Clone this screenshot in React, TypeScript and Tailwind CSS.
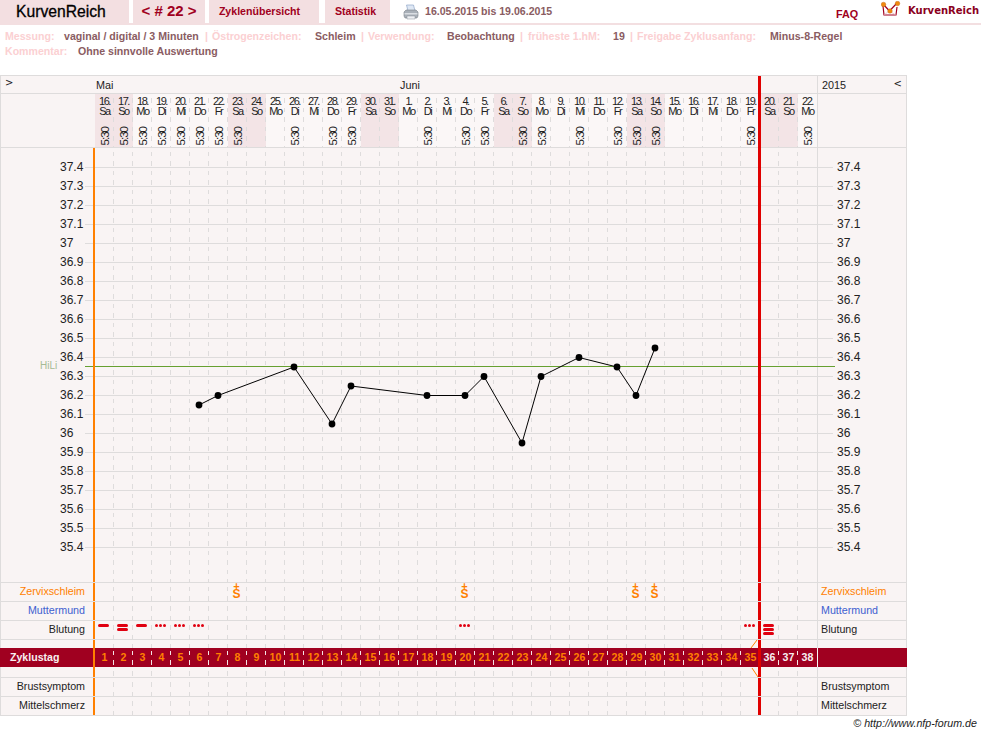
const DAYS = [
  ...Array.from({ length: 16 }, (_, i) => 16 + i),
  ...Array.from({ length: 22 }, (_, i) => 1 + i),
];
const WEEK = ['Sa', 'So', 'Mo', 'Di', 'Mi', 'Do', 'Fr'];
const MEASURED = [0, 1, 2, 3, 4, 5, 6, 7, 10, 12, 13, 17, 19, 20, 22, 23, 25, 27, 28, 29, 34, 37];
const TEMPS = [37.4, 37.3, 37.2, 37.1, 37, 36.9, 36.8, 36.7, 36.6, 36.5, 36.4, 36.3, 36.2, 36.1, 36, 35.9, 35.8, 35.7, 35.6, 35.5, 35.4];
const POINTS: [number, number][] = [
  [5, 36.15], [6, 36.2], [10, 36.35], [12, 36.05], [13, 36.25], [17, 36.2], [19, 36.2],
  [20, 36.3], [22, 35.95], [23, 36.3], [25, 36.4], [27, 36.35], [28, 36.2], [29, 36.45],
];
const SCHLEIM = [7, 19, 28, 29];
const INFO: [string, string, number][] = [
  ['label', 'Messung:', 59],
  ['value', 'vaginal / digital / 3 Minuten', 141],
  ['label', '|', 7],
  ['label', 'Östrogenzeichen:', 103],
  ['value', 'Schleim', 46],
  ['label', '|', 7],
  ['label', 'Verwendung:', 79],
  ['value', 'Beobachtung', 73],
  ['label', '|', 8],
  ['label', 'früheste 1.hM:', 85],
  ['value', '19', 17],
  ['label', '|', 7],
  ['label', 'Freigabe Zyklusanfang:', 133],
  ['value', 'Minus-8-Regel', 90],
];

const font = 'font-["Liberation_Sans",Arial,sans-serif]';
const px = (i: number) => 104 + 19 * i;
const py = (t: number) => 285.5 - (t - 36) * 190;

const Dashes = ({ dark = false }: { dark?: boolean }) => (
  <div className="flex h-full">
    {DAYS.map((_, i) => (
      <div
        key={i}
        className={`h-full w-[19px] ${i === 37 ? '' : dark ? 'bg-[repeating-linear-gradient(to_bottom,transparent_0,transparent_3px,#f4e4e6_3px,#f4e4e6_7.5px,transparent_7.5px,transparent_9.5px)]' : 'bg-[repeating-linear-gradient(to_bottom,transparent_0,transparent_4px,#dedcdc_4px,#dedcdc_8.5px,transparent_8.5px,transparent_9.5px)]'} bg-[length:1px_100%] bg-[position:right_top] bg-no-repeat`}
      />
    ))}
  </div>
);

const Row = ({ h, label, labelClass = 'text-[#222]', right, rightClass = 'text-[#222]', children }: {
  h: string;
  label?: string;
  labelClass?: string;
  right?: string;
  rightClass?: string;
  children?: React.ReactNode;
}) => (
  <div className={`flex ${h} border-b border-[#dedcdc] text-[10.7px]`}>
    <div className={`flex w-[93px] items-center justify-end border-l border-[#dedcdc] pb-[2px] pr-[8px] ${labelClass}`}>{label}</div>
    <div className="relative w-[724px] border-l-2 border-[#ff8000]">
      <Dashes />
      {children}
      <div className="absolute inset-y-0 left-[663px] w-[3px] bg-[#e00000]" />
    </div>
    <div className={`flex w-[90px] items-center border-x border-[#dedcdc] pb-[2px] pl-[3px] ${rightClass}`}>{right}</div>
  </div>
);

const Bar = () => <div className="h-[3px] w-[11px] rounded-full bg-[#e00010]" />;
const Dots = () => (
  <div className="flex gap-[1px]">
    <div className="h-[3px] w-[3px] rounded-full bg-[#e00010]" />
    <div className="h-[3px] w-[3px] rounded-full bg-[#e00010]" />
    <div className="h-[3px] w-[3px] rounded-full bg-[#e00010]" />
  </div>
);

const Bleed = ({ col, children }: { col: number; children: React.ReactNode }) => (
  <div className="absolute top-[3px] flex w-[19px] flex-col items-center gap-[1px]" style={{ left: col * 19 - 1 }}>
    {children}
  </div>
);

export default function App() {
  return (
    <div className={`h-[735px] w-[981px] overflow-hidden bg-white ${font}`}>
      {/* Top navigation */}
      <div className="flex h-[25px] items-start whitespace-nowrap border-b-2 border-[#f3dfe1]">
        <div className="flex h-[23px] w-[129px] shrink-0 items-center bg-[#f3dfe1] pl-[16px] text-[15.7px] text-black [-webkit-text-stroke:0.3px_#000]">KurvenReich</div>
        <div className="ml-[4px] flex h-[23px] w-[72px] shrink-0 items-center justify-center bg-[#f3dfe1] text-[15px] font-bold text-[#a00020]">&lt; # 22 &gt;</div>
        <div className="ml-[4px] flex h-[23px] w-[110px] shrink-0 items-center justify-center bg-[#f3dfe1] pr-[9px] text-[10.6px] font-bold text-[#a00020]">Zyklenübersicht</div>
        <div className="ml-[6px] flex h-[23px] w-[65px] shrink-0 items-center justify-center bg-[#f3dfe1] pr-[4px] text-[10.6px] font-bold text-[#a00020]">Statistik</div>
        <svg className="ml-[13px] mt-[4px] shrink-0" width="16" height="16" viewBox="0 0 16 16">
          <path d="M3.5 1h7l1.5 6H5z" fill="#dfe8f4" stroke="#8fa6c8" strokeWidth="0.7" />
          <path d="M1 8l2-2h10l2 2v4l-1 2H2l-1-2z" fill="#a9b0b8" stroke="#7c838c" strokeWidth="0.6" />
          <path d="M1.5 9h13v1.5h-13z" fill="#dadee3" />
          <path d="M4 12h8v3H4z" fill="#eef0f3" stroke="#8a9099" strokeWidth="0.5" />
        </svg>
        <div className="ml-[6px] flex h-[23px] w-[128px] shrink-0 items-center text-[10.6px] font-bold text-[#8a5c62]">16.05.2015 bis 19.06.2015</div>
        <div className="ml-[283px] mt-[6px] w-[21px] shrink-0 text-[10.8px] font-bold text-[#a00020]">FAQ</div>
        <svg className="ml-[24px] mt-[1px] shrink-0" width="20" height="17" viewBox="0 0 20 17">
          <path d="M2 5l1 9h12l1-8" fill="none" stroke="#a00020" strokeWidth="1.2" />
          <path d="M3 14l5-4 7 4" fill="none" stroke="#e8b0b8" strokeWidth="0.7" />
          <path d="M2.5 3.5l6 6.5 8-8.5" fill="none" stroke="#a00020" strokeWidth="1.2" />
          <circle cx="2.5" cy="3.5" r="2.3" fill="#f08a10" stroke="#c06010" strokeWidth="0.4" />
          <circle cx="9" cy="10" r="2.3" fill="#f08a10" stroke="#c06010" strokeWidth="0.4" />
          <circle cx="16.5" cy="2.5" r="2.3" fill="#f08a10" stroke="#c06010" strokeWidth="0.4" />
        </svg>
        <div className="ml-[7px] mt-[3px] font-['DejaVu_Sans',sans-serif] text-[10px] font-bold text-[#8a0020]">KurvenReich</div>
      </div>

      {/* Cycle info */}
      <div className="h-[50px] whitespace-nowrap pl-[5px] pt-[4px] text-[10.6px] font-bold leading-[15px]">
        <div className="flex">
          {INFO.map(([kind, text, width], i) => (
            <span key={i} className={`shrink-0 ${kind === 'label' ? 'text-[#fbd0d2]' : 'text-[#8a5c62]'}`} style={{ width }}>{text}</span>
          ))}
        </div>
        <div className="flex">
          <span className="w-[73px] text-[#fbd0d2]">Kommentar:</span>
          <span className="text-[#8a5c62]">Ohne sinnvolle Auswertung</span>
        </div>
      </div>

      {/* Chart table */}
      <div className="w-[907px] border-t border-[#dedcdc] bg-[#f9f4f4] text-[#222]">
        {/* Month row */}
        <div className="relative flex h-[18px] border-b border-[#dedcdc] text-[10.8px]">
          <div className="w-[95px] border-l border-[#dedcdc] pl-[4px] pt-[1px] font-['DejaVu_Sans',sans-serif] text-[10px] leading-[12px]">&gt;</div>
          <div className="flex w-[722px] items-center pt-[1px]">
            <span className="ml-[1px] w-[304px]">Mai</span>
            <span>Juni</span>
          </div>
          <div className="flex w-[90px] items-center justify-between border-x border-[#dedcdc] px-[4px] pt-[1px]">
            <span>2015</span>
            <span className="-mt-[3px] font-['DejaVu_Sans',sans-serif] text-[10px]">&lt;</span>
          </div>
          <div className="absolute -bottom-px left-[758px] top-0 w-[3px] bg-[#e00000]" />
        </div>

        {/* Date row */}
        <div className="relative flex h-[54px] border-b border-[#dedcdc] text-[11px]">
          <div className="w-[95px] border-l border-[#dedcdc]" />
          <div className="flex">
            {DAYS.map((d, i) => (
              <div
                key={i}
                className={`relative flex h-full w-[19px] flex-col items-center leading-[10px] tracking-[-1.5px] ${
                  WEEK[i % 7] === 'Sa' || WEEK[i % 7] === 'So' ? 'bg-[#f3e4e6]' : 'bg-[#fbf7f7]'
                }`}
              >
                <span className="mt-[2px]">{d}.</span>
                <span>{WEEK[i % 7]}</span>
                {MEASURED.includes(i) && (
                  <span className="absolute bottom-[2px] rotate-180 text-[11.5px] leading-[12px] tracking-[-1px] [writing-mode:vertical-rl]">5:30</span>
                )}
                {i < 37 && (
                  <div className="absolute inset-y-0 right-0 w-px bg-[repeating-linear-gradient(to_bottom,transparent_0,transparent_4px,#dedcdc_4px,#dedcdc_8.5px,transparent_8.5px,transparent_9.5px)]" />
                )}
              </div>
            ))}
          </div>
          <div className="w-[90px] border-x border-[#dedcdc]" />
          <div className="absolute -bottom-px left-[758px] top-0 w-[3px] bg-[#e00000]" />
        </div>

        {/* Temperature curve */}
        <div className="relative flex h-[435px] border-b border-[#dedcdc] text-[12px]">
          <div className="w-[93px] border-l border-[#dedcdc] pl-[59px] pt-[10px]">
            {TEMPS.map((t) => (
              <div key={t} className="h-[19px] leading-[19px]">{t}</div>
            ))}
          </div>
          <div className="relative w-[724px] border-l-2 border-[#ff8000]">
            <Dashes />
          </div>
          <div className="w-[90px] border-x border-[#dedcdc] pl-[19px] pt-[10px]">
            {TEMPS.map((t) => (
              <div key={t} className="h-[19px] leading-[19px]">{t}</div>
            ))}
          </div>
          <svg className="absolute left-0 top-0" width="907" height="434">
            {TEMPS.map((t) => (
              <line key={t} x1="85" x2="833" y1={py(t)} y2={py(t)} stroke="#dedcdc" />
            ))}
            <line x1="85" x2="835" y1="218.5" y2="218.5" stroke="#66a030" />
            <polyline points={POINTS.map(([i, t]) => `${px(i)},${py(t)}`).join(' ')} fill="none" stroke="#000" />
            {POINTS.map(([i, t]) => (
              <circle key={i} cx={px(i)} cy={py(t)} r="3.4" fill="#000" />
            ))}
            <rect x="93" y="0" width="2" height="434" fill="#ff8000" />
          </svg>
          <div className="absolute left-[40px] top-[212px] text-[10px] leading-[12px] text-[#a5bb95]">HiLi</div>
          <div className="absolute inset-y-0 left-[758px] w-[3px] bg-[#e00000]" />
        </div>

        {/* Symptom rows */}
        <Row h="h-[19px]" label="Zervixschleim" labelClass="text-[#ff8000]" right="Zervixschleim" rightClass="text-[#ff8000]">
          {SCHLEIM.map((i) => (
            <div key={i} className="absolute top-0 flex w-[19px] flex-col items-center font-bold text-[#ff8000]" style={{ left: i * 19 - 1 }}>
              <span className="h-[7px] text-[11px] leading-[7px]">+</span>
              <span className="h-[9px] text-[12px] leading-[9px]">S</span>
            </div>
          ))}
        </Row>
        <Row h="h-[19px]" label="Muttermund" labelClass="text-[#4060d0]" right="Muttermund" rightClass="text-[#4060d0]" />
        <Row h="h-[19px]" label="Blutung" right="Blutung">
          <Bleed col={0}><Bar /></Bleed>
          <Bleed col={1}><Bar /><Bar /></Bleed>
          <Bleed col={2}><Bar /></Bleed>
          <Bleed col={3}><Dots /></Bleed>
          <Bleed col={4}><Dots /></Bleed>
          <Bleed col={5}><Dots /></Bleed>
          <Bleed col={19}><Dots /></Bleed>
          <Bleed col={34}><Dots /></Bleed>
          <Bleed col={35}><Bar /><Bar /><Bar /></Bleed>
        </Row>
        <div className="flex h-[8px] text-[10.7px]">
          <div className="w-[93px] border-l border-[#dedcdc]" />
          <div className="relative w-[724px] border-l-2 border-[#ff8000]">
            <Dashes />
            <svg className="absolute left-[654px] top-0" width="10" height="8">
              <line x1="2" y1="8" x2="8" y2="0" stroke="#ff8000" />
            </svg>
            <div className="absolute inset-y-0 left-[663px] w-[3px] bg-[#e00000]" />
          </div>
          <div className="w-[90px] border-x border-[#dedcdc]" />
        </div>

        {/* Cycle days */}
        <div className="flex h-[19px] items-stretch bg-[#a00020] text-[10.6px] font-bold">
          <div className="flex w-[93px] items-center pl-[10px] text-[#f8f0f0]">Zyklustag</div>
          <div className="relative w-[724px] border-l-2 border-[#ff8000]">
            <div className="absolute inset-0"><Dashes dark /></div>
            <div className="relative flex h-full">
              {DAYS.map((_, i) => (
                <div key={i} className={`flex w-[19px] items-center justify-center ${i > 34 ? 'text-[#f8f0f0]' : 'text-[#ff8000]'}`}>
                  {i + 1}
                </div>
              ))}
            </div>
            <div className="absolute inset-y-0 left-[663px] w-[3px] bg-[#e00000]" />
          </div>
          <div className="w-[90px] border-l border-[#f8f3f3]" />
        </div>

        <Row h="h-[11px]">
          <svg className="absolute left-[654px] top-0" width="10" height="10">
            <line x1="3" y1="1" x2="9" y2="10" stroke="#ff8000" />
          </svg>
        </Row>
        <Row h="h-[19px]" label="Brustsymptom" right="Brustsymptom" />
        <Row h="h-[19px]" label="Mittelschmerz" right="Mittelschmerz" />
      </div>

      <div className="w-[977px] pt-[1px] text-right text-[10.7px] italic leading-[12px] text-[#222]">© http://www.nfp-forum.de</div>
    </div>
  );
}
